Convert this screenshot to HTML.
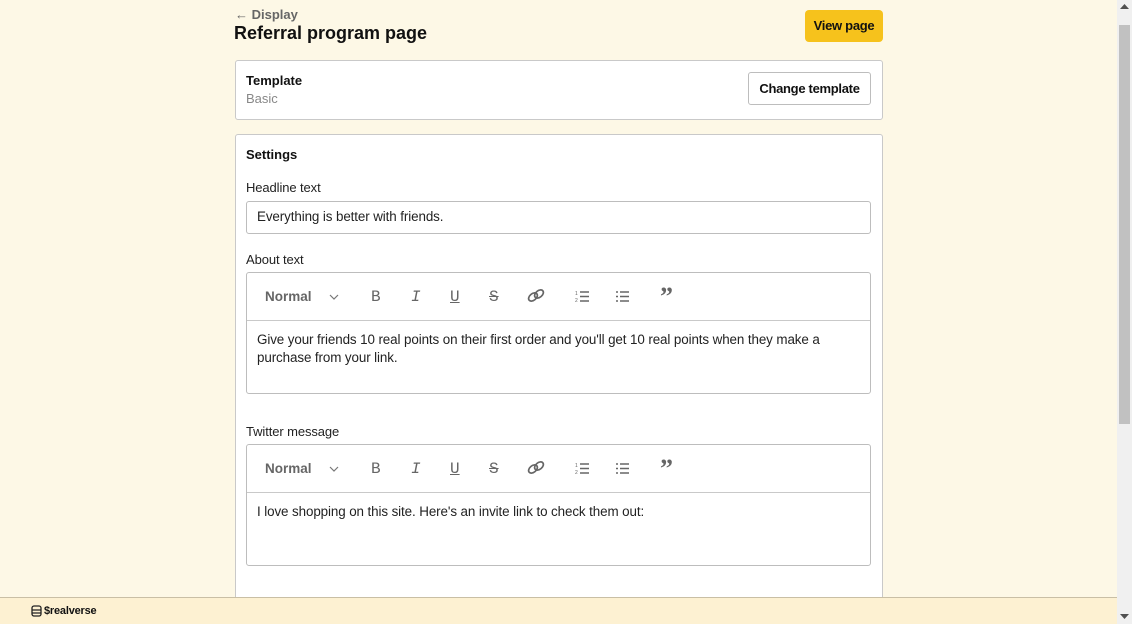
<!DOCTYPE html>
<html><head><meta charset="utf-8"><style>
*{box-sizing:border-box;margin:0;padding:0}
html,body{width:1132px;height:624px;overflow:hidden}
body{background:#fdf8e6;font-family:"Liberation Sans",sans-serif;color:#111;position:relative}
.a{position:absolute}
.card{position:absolute;background:#fff;border:1px solid #c9c9c9;border-radius:3px}
.lbl{position:absolute;font-size:13px;color:#222;letter-spacing:-0.1px}
.inp{position:absolute;border:1px solid #bdbdbd;border-radius:3px;background:#fff}
.tb{position:absolute;left:0;top:0;right:0;height:48px;border-bottom:1px solid #c9c9c9}
.ic{position:absolute;top:15px;color:#666;font-size:16px}
.txt{position:absolute;left:10px;font-size:13.4px;color:#222;line-height:18px;letter-spacing:-0.1px}
</style></head><body>
<div class="a" style="left:235px;top:7px;font-size:13px;color:#666;font-weight:bold">← Display</div>
<div class="a" style="left:234px;top:23px;font-size:18px;font-weight:bold;color:#111">Referral program page</div>
<div class="a" style="left:805px;top:10px;width:78px;height:32px;background:#f6c21c;border-radius:4px;font-size:13px;font-weight:bold;text-align:center;line-height:32px;letter-spacing:-0.3px">View page</div>

<div class="card" style="left:235px;top:60px;width:648px;height:60px">
<div class="a" style="left:10px;top:12px;font-size:13px;font-weight:bold">Template</div>
<div class="a" style="left:10px;top:30px;font-size:13px;color:#888">Basic</div>
<div class="a" style="left:512px;top:11px;width:123px;height:33px;border:1px solid #bdbdbd;border-radius:3px;font-size:13px;font-weight:bold;text-align:center;line-height:31px;letter-spacing:-0.3px">Change template</div>
</div>

<div class="card" style="left:235px;top:134px;width:648px;height:480px">
<div class="a" style="left:10px;top:12px;font-size:13px;font-weight:bold">Settings</div>
<div class="lbl" style="left:10px;top:45px">Headline text</div>
<div class="inp" style="left:10px;top:66px;width:625px;height:33px"><div class="txt" style="top:6px">Everything is better with friends.</div></div>
<div class="lbl" style="left:10px;top:117px">About text</div>
<div class="inp" style="left:10px;top:137px;width:625px;height:122px">
<div class="tb">
<div class="ic" style="left:18px;font-size:13.5px;font-weight:bold;top:16px">Normal</div>
<svg class="a" style="left:82px;top:20px" width="10" height="8"><path d="M1 2l4 4 4-4" stroke="#777" fill="none" stroke-width="1.2"/></svg>
<div class="ic" style="left:124px;font-family:'Liberation Mono'">B</div>
<div class="ic" style="left:164px;font-family:'Liberation Mono';font-style:italic">I</div>
<div class="ic" style="left:203px;font-family:'Liberation Mono';text-decoration:underline">U</div>
<div class="ic" style="left:242px;font-family:'Liberation Mono';text-decoration:line-through">S</div>
<svg class="a" style="left:280px;top:15px" width="18" height="15"><ellipse cx="6" cy="9" rx="5" ry="3.3" transform="rotate(-40 6 9)" stroke="#666" fill="none" stroke-width="1.7"/><ellipse cx="12" cy="6" rx="5" ry="3.3" transform="rotate(-40 12 6)" stroke="#666" fill="none" stroke-width="1.7"/></svg>
<svg class="a" style="left:328px;top:17px" width="15" height="13"><path d="M5 2h9M5 6.5h9M5 11h9" stroke="#666" stroke-width="1.6"/><text x="0" y="5" font-size="5" fill="#666">1</text><text x="0" y="12" font-size="5" fill="#666">2</text></svg>
<svg class="a" style="left:368px;top:17px" width="15" height="13"><path d="M5 2h9M5 6.5h9M5 11h9M1 2h2M1 6.5h2M1 11h2" stroke="#666" stroke-width="1.6"/></svg>
<div class="ic" style="left:413px;top:9px;font-size:26px;font-weight:bold;font-family:'Liberation Serif'">”</div>
</div>
<div class="txt" style="top:58px">Give your friends 10 real points on their first order and you'll get 10 real points when they make a<br>purchase from your link.</div>
</div>
<div class="lbl" style="left:10px;top:289px">Twitter message</div>
<div class="inp" style="left:10px;top:309px;width:625px;height:122px">
<div class="tb">
<div class="ic" style="left:18px;font-size:13.5px;font-weight:bold;top:16px">Normal</div>
<svg class="a" style="left:82px;top:20px" width="10" height="8"><path d="M1 2l4 4 4-4" stroke="#777" fill="none" stroke-width="1.2"/></svg>
<div class="ic" style="left:124px;font-family:'Liberation Mono'">B</div>
<div class="ic" style="left:164px;font-family:'Liberation Mono';font-style:italic">I</div>
<div class="ic" style="left:203px;font-family:'Liberation Mono';text-decoration:underline">U</div>
<div class="ic" style="left:242px;font-family:'Liberation Mono';text-decoration:line-through">S</div>
<svg class="a" style="left:280px;top:15px" width="18" height="15"><ellipse cx="6" cy="9" rx="5" ry="3.3" transform="rotate(-40 6 9)" stroke="#666" fill="none" stroke-width="1.7"/><ellipse cx="12" cy="6" rx="5" ry="3.3" transform="rotate(-40 12 6)" stroke="#666" fill="none" stroke-width="1.7"/></svg>
<svg class="a" style="left:328px;top:17px" width="15" height="13"><path d="M5 2h9M5 6.5h9M5 11h9" stroke="#666" stroke-width="1.6"/><text x="0" y="5" font-size="5" fill="#666">1</text><text x="0" y="12" font-size="5" fill="#666">2</text></svg>
<svg class="a" style="left:368px;top:17px" width="15" height="13"><path d="M5 2h9M5 6.5h9M5 11h9M1 2h2M1 6.5h2M1 11h2" stroke="#666" stroke-width="1.6"/></svg>
<div class="ic" style="left:413px;top:9px;font-size:26px;font-weight:bold;font-family:'Liberation Serif'">”</div>
</div>
<div class="txt" style="top:58px">I love shopping on this site. Here's an invite link to check them out:</div>
</div>
</div>

<div class="a" style="left:0;top:597px;width:1117px;height:27px;background:#fdf1d2;border-top:1px solid #c9bfa5;z-index:5"></div>
<svg class="a" style="left:31px;top:605px;z-index:6" width="11" height="12"><rect x="1" y="1" width="9" height="10" rx="2" stroke="#222" fill="none" stroke-width="1.3"/><path d="M1 5h9M1 8h9" stroke="#222" stroke-width="1.2"/></svg>
<div class="a" style="left:44px;top:605px;font-size:11px;font-weight:bold;letter-spacing:-0.2px;z-index:6">$realverse</div>

<div class="a" style="left:1117px;top:0;width:15px;height:624px;background:#f0f0f0;z-index:7"></div>
<div class="a" style="left:1119px;top:25px;width:11px;height:399px;background:#c1c1c1;z-index:8"></div>
<svg class="a" style="left:1120px;top:4px;z-index:8" width="9" height="6"><path d="M0 5L4.5 0 9 5z" fill="#505050"/></svg>
<svg class="a" style="left:1120px;top:614px;z-index:8" width="9" height="6"><path d="M0 0L4.5 5 9 0z" fill="#505050"/></svg>
</body></html>
